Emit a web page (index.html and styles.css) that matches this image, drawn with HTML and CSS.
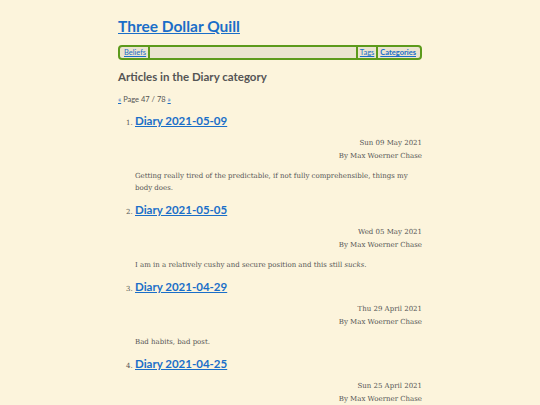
FILE: index.html
```html
<!DOCTYPE html>
<html lang="en">
<head>
  <meta charset="UTF-8">
  <title>Articles in the Diary category - Three Dollar Quill</title>
  <link rel="stylesheet" href="styles.css">
</head>
<body>
  <div class="page">
    <header>
      <h1 class="site-title"><a href="#">Three Dollar Quill</a></h1>
      <nav class="menu">
        <a class="item" href="#">Beliefs</a>
        <span class="spacer"></span>
        <a class="item sep" href="#">Tags</a>
        <a class="item sep current" href="#">Categories</a>
      </nav>
    </header>

    <main>
      <h2 class="heading">Articles in the Diary category</h2>
      <p class="pager"><a href="#">«</a> Page 47 / 78 <a href="#">»</a></p>

      <ol class="articles" start="1">
        <li>
          <h3 class="post-title"><a href="#">Diary 2021-05-09</a></h3>
          <div class="meta">
            <div>Sun 09 May 2021</div>
            <div>By Max Woerner Chase</div>
          </div>
          <p class="summary">Getting really tired of the predictable, if not fully comprehensible, things my body does.</p>
        </li>
        <li>
          <h3 class="post-title"><a href="#">Diary 2021-05-05</a></h3>
          <div class="meta">
            <div>Wed 05 May 2021</div>
            <div>By Max Woerner Chase</div>
          </div>
          <p class="summary">I am in a relatively cushy and secure position and this still <em>sucks</em>.</p>
        </li>
        <li>
          <h3 class="post-title"><a href="#">Diary 2021-04-29</a></h3>
          <div class="meta">
            <div>Thu 29 April 2021</div>
            <div>By Max Woerner Chase</div>
          </div>
          <p class="summary">Bad habits, bad post.</p>
        </li>
        <li>
          <h3 class="post-title"><a href="#">Diary 2021-04-25</a></h3>
          <div class="meta">
            <div>Sun 25 April 2021</div>
            <div>By Max Woerner Chase</div>
          </div>
        </li>
      </ol>
    </main>
  </div>
</body>
</html>
```

FILE: styles.css
```css
body {
  margin: 0;
  background: #fcf4dc;
  color: #555;
  font-family: "DejaVu Serif", serif;
  font-size: 7px;
}

a {
  color: #1a6ec8;
}

.page {
  width: 304px;
  margin: 0 auto;
  padding-top: 15px;
}

.site-title,
.heading,
.post-title,
.menu,
.pager {
  font-family: Lato, sans-serif;
}

.site-title {
  margin: 0;
  font-size: 15.5px;
  line-height: 22px;
  font-weight: 700;
}

.menu {
  display: flex;
  margin-top: 8px;
  height: 11px;
  border: 2px solid #5c9a1c;
  border-radius: 4px;
  background: #ebe4d0;
  font-size: 7.5px;
  line-height: 11px;
  padding: 0 2px;
}

.menu .item {
  padding: 0 2px;
  border-right: 2px solid #5c9a1c;
}

.menu .spacer {
  flex: 1;
}

.menu .sep {
  border-right: 0;
  border-left: 2px solid #5c9a1c;
}

.menu .current {
  font-weight: 700;
}

.heading {
  margin: 8px 0 0;
  font-size: 11.5px;
  line-height: 18px;
  font-weight: 700;
  color: #555;
}

.pager {
  margin: 8px 0 0;
  font-size: 7.5px;
  line-height: 12px;
}

.articles {
  margin: 6px 0 0;
  padding-left: 17px;
}

.articles li {
  padding-bottom: 7px;
}

.post-title {
  margin: 0;
  font-size: 11.5px;
  line-height: 18px;
  font-weight: 700;
}

.meta {
  margin-top: 7px;
  text-align: right;
  line-height: 12.5px;
}

.summary {
  margin: 8px 0 0;
  line-height: 12px;
}
```
